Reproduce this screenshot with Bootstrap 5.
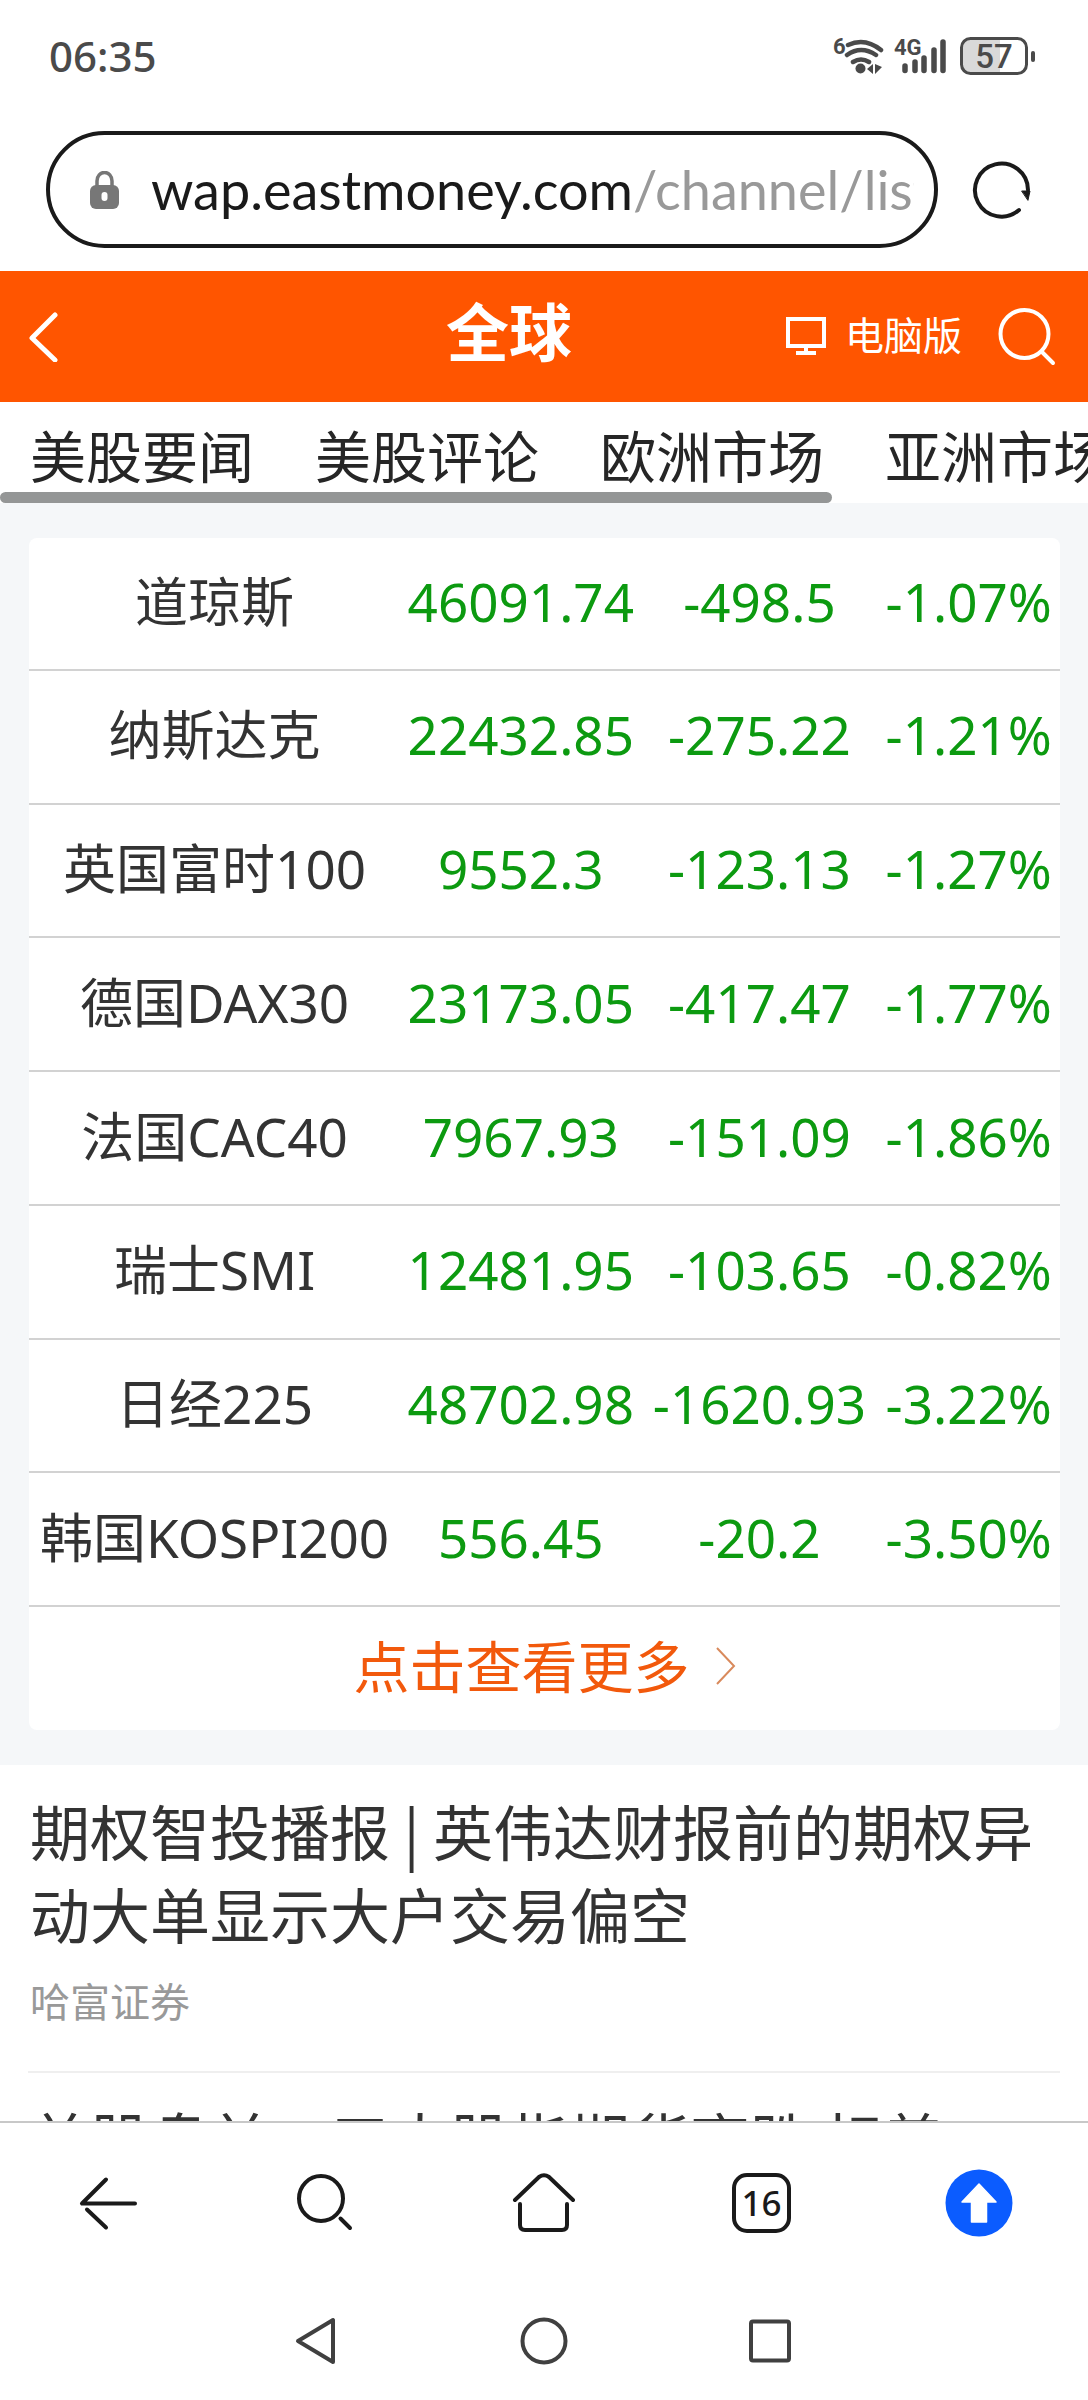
<!DOCTYPE html>
<html lang="zh-CN">
<head>
<meta charset="utf-8">
<meta name="viewport" content="width=device-width, initial-scale=1">
<title>全球</title>
<link href="https://cdn.jsdelivr.net/npm/bootstrap@5.3.0/dist/css/bootstrap.min.css" rel="stylesheet">
<style>
body{font-family:"Noto Sans","Noto Sans CJK SC",sans-serif;color:#333;background:#fff}
svg{display:block;flex:none}
a{color:inherit;text-decoration:none}
.status-bar{height:110px;padding:2px 52px 0 49px;color:#4a4a4a}
.clock{font-size:42px;line-height:50px;font-weight:500}
.address-bar{padding:21px 56px 23px 46px;gap:34px}
.url-pill{height:117px;border:4px solid #1a1a1a;border-radius:60px;background:#fff;padding:0 20px 0 40px;gap:32px;min-width:0}
.url-text{font-family:Lato,"Noto Sans",sans-serif;font-size:54px;line-height:70px;color:#1a1a1a;overflow:hidden;min-width:0}
.url-path{color:#999}
.top-bar{background:#f50;color:#fff;height:131px;padding:0 32px 4px 28px}
.page-title{font-family:"Noto Sans CJK SC",sans-serif;font-size:63px;line-height:72px;font-weight:700;left:0;top:22px;width:1018px}
.desktop-link{font-size:39px;line-height:56px;gap:18px}
.tab-strip{height:90px;padding:0 30px;gap:61px;overflow:hidden;color:#262626}
.tab-strip a{font-size:56px;line-height:80px;padding-top:14px}
.scroll-thumb{height:11px;border-radius:6px;background:#949696}
.market-area{background:#f5f7f9;padding:35px 28px 35px 29px}
.market-card{background:#fff;border-radius:8px}
.quotes{table-layout:fixed;height:1069px;color:#333}
.quotes th,.quotes td{padding:0 0 3px;text-align:center;vertical-align:middle;font-size:53px;line-height:76px;font-weight:400;white-space:nowrap;border-bottom:2px solid #d2d2d2}
.quotes td{color:#0c9a10}
.more-link{height:123px;padding-bottom:5px;font-size:56px;line-height:80px;color:#f2590c;gap:26px}
.news-item{margin:0 28px;padding:23px 2px 0;font-family:"Noto Sans CJK SC",sans-serif;border-bottom:2px solid #efefef;height:308px}
.news-item h2{font-size:60px;line-height:83px;font-weight:400;margin:0}
.news-source{font-size:40px;line-height:56px;color:#999;margin-top:18px}
.bottom-bars{border-top:2px solid #c8c8c8;background:#fff;height:279px}
.tool-row{height:159px}
.tool-row button,.system-row button,.address-bar button,.top-bar button{color:#1a1a1a}
.plain-btn{border:0;background:none;padding:0}
.tab-count{width:59px;height:60px;border:4px solid #1a1a1a;border-radius:15px;font-size:35px;line-height:50px;font-weight:500}
.system-row{gap:178px;height:118px}
</style>
<script src="https://cdn.jsdelivr.net/npm/bootstrap@5.3.0/dist/js/bootstrap.bundle.min.js"></script>
</head>
<body class="vh-100 d-flex flex-column overflow-hidden">
<header class="flex-shrink-0">
  <div class="status-bar d-flex align-items-center justify-content-between">
    <span class="clock">06:35</span>
    <div class="d-flex align-items-center">
      <svg width="204" height="40" viewBox="831 36 204 40" fill="none" stroke="#4a4a4a" stroke-linecap="round" font-family="Roboto, sans-serif">
        <text x="832" y="54" font-size="22" font-weight="700" fill="#4a4a4a" stroke="none">6</text>
        <g stroke-width="4.500"><path d="M847 45Q864 37 880 50M846 55Q860 45 875 55M852 62Q860 57 868 62"/></g>
        <circle cx="859.500" cy="68.500" r="5" fill="#4a4a4a" stroke="none"/>
        <path d="M872 64v10l-6-5zM874 64v10l7-7z" fill="#4a4a4a" stroke="none"/>
        <text x="893" y="55" font-size="22" font-weight="700" fill="#4a4a4a" stroke="none">4G</text>
        <g stroke-width="5.500"><path d="M904 66v4.500M914 62v8.500M923 58v12.500M933 50v20.500M942 42v28.500"/></g>
        <path d="M968 39h31v34h-31q-7 0-7-7v-20q0-7 7-7z" fill="#d9d9d9" stroke="none"/>
        <rect x="960.500" y="38.500" width="65" height="35" rx="9" stroke-width="3"/>
        <path d="M1032 53v7" stroke-width="4"/>
        <text x="993" y="68" text-anchor="middle" font-size="33" font-weight="500" fill="#4a4a4a" stroke="none">57</text>
      </svg>
    </div>
  </div>
  <div class="address-bar d-flex align-items-center">
    <button type="button" class="url-pill d-flex align-items-center flex-grow-1 text-start">
      <svg width="29" height="38" viewBox="0 0 29 38"><path d="M7 15V10a7 8 0 0 1 15 0v5" fill="none" stroke="#777" stroke-width="3.500"/><rect y="14" width="29" height="24" rx="6" fill="#777"/><rect x="11.500" y="21" width="6" height="9" rx="3" fill="#fff"/></svg>
      <span class="url-text text-nowrap flex-grow-1">wap.eastmoney.com<span class="url-path">/channel/list</span></span>
    </button>
    <button type="button" class="plain-btn" aria-label="刷新">
      <svg width="60" height="60" viewBox="971 159 60 60" fill="none" stroke="#1a1a1a" stroke-width="4" stroke-linecap="round"><path d="M1018 209A26.500 26.500 0 1 1 1027 189"/><path d="M1021 190h8l-2 9z" fill="#1a1a1a" stroke-width="1"/></svg>
    </button>
  </div>
  <div class="top-bar d-flex align-items-center justify-content-between position-relative">
    <h1 class="page-title position-absolute text-center m-0">全球</h1>
    <a href="#" aria-label="返回" class="position-relative"><svg width="32" height="54" viewBox="0 0 32 54" fill="none" stroke="#fff" stroke-width="5" stroke-linecap="round" stroke-linejoin="round"><path d="M27 7L4 30L27 52"/></svg></a>
    <div class="d-flex align-items-center gap-4 position-relative">
      <a href="#" class="desktop-link d-flex align-items-center text-white">
        <svg width="42" height="40" viewBox="0 0 42 40" fill="none" stroke="#fff" stroke-width="4"><path d="M3 4h36v27H3zM21 31v6M11 38h20"/></svg>电脑版</a>
      <a href="#" aria-label="搜索"><svg width="70" height="62" viewBox="984 303 70 62" fill="none" stroke="#fff" stroke-width="4" stroke-linecap="round"><ellipse cx="1022.500" cy="333" rx="24" ry="24"/><path d="M1040 351l11 11"/></svg></a>
    </div>
  </div>
</header>
<main class="flex-grow-1 overflow-hidden">
  <nav class="tab-strip d-flex text-nowrap">
    <a href="#">美股要闻</a><a href="#">美股评论</a><a href="#">欧洲市场</a><a href="#">亚洲市场</a>
  </nav>
  <div class="scroll-thumb" style="width:76.5%"></div>
  <section class="market-area">
    <div class="market-card">
      <table class="quotes w-100">
        <colgroup><col style="width:36%"><col style="width:23.4%"><col style="width:22.9%"><col style="width:17.7%"></colgroup>
        <tbody>
          <tr><th scope="row">道琼斯</th><td>46091.74</td><td>-498.5</td><td>-1.07%</td></tr>
          <tr><th scope="row">纳斯达克</th><td>22432.85</td><td>-275.22</td><td>-1.21%</td></tr>
          <tr><th scope="row">英国富时100</th><td>9552.3</td><td>-123.13</td><td>-1.27%</td></tr>
          <tr><th scope="row">德国DAX30</th><td>23173.05</td><td>-417.47</td><td>-1.77%</td></tr>
          <tr><th scope="row">法国CAC40</th><td>7967.93</td><td>-151.09</td><td>-1.86%</td></tr>
          <tr><th scope="row">瑞士SMI</th><td>12481.95</td><td>-103.65</td><td>-0.82%</td></tr>
          <tr><th scope="row">日经225</th><td>48702.98</td><td>-1620.93</td><td>-3.22%</td></tr>
          <tr><th scope="row">韩国KOSPI200</th><td>556.45</td><td>-20.2</td><td>-3.50%</td></tr>
        </tbody>
      </table>
      <a href="#" class="more-link d-flex align-items-center justify-content-center">点击查看更多<svg width="20" height="38" viewBox="0 0 20 38" fill="none" stroke="#d98a5c" stroke-width="2"><path d="M1 1l17 18L1 37"/></svg></a>
    </div>
  </section>
  <article class="news-item">
    <h2><a href="#">期权智投播报 | 英伟达财报前的期权异动大单显示大户交易偏空</a></h2>
    <div class="news-source">哈富证券</div>
  </article>
  <article class="news-item">
    <h2><a href="#">美股盘前：三大股指期货齐跌 标普</a></h2>
  </article>
</main>
<footer class="bottom-bars flex-shrink-0">
  <div class="tool-row row g-0 row-cols-5 align-items-center">
    <div class="col d-flex justify-content-center"><button type="button" class="plain-btn" aria-label="后退"><svg width="60" height="60" viewBox="79 2172 60 60" fill="none" stroke="#1a1a1a" stroke-width="4" stroke-linecap="round" stroke-linejoin="round"><path d="M106 2178.500L82 2202.500H135M87 2208.500L106 2226.500"/></svg></button></div>
    <div class="col d-flex justify-content-center"><button type="button" class="plain-btn" aria-label="搜索"><svg width="60" height="60" viewBox="296 2172 60 60" fill="none" stroke="#1a1a1a" stroke-width="4" stroke-linecap="round"><ellipse cx="321" cy="2197.500" rx="22" ry="22.500"/><path d="M340.500 2217.500l9.500 9.500"/></svg></button></div>
    <div class="col d-flex justify-content-center"><button type="button" class="plain-btn" aria-label="主页"><svg width="64" height="62" viewBox="512 2171 64 62" fill="none" stroke="#1a1a1a" stroke-width="4" stroke-linecap="round" stroke-linejoin="round"><path d="M515 2199L539 2176Q544 2172.500 549 2176L573 2199M520 2203V2224Q520 2229 525 2229H562Q567 2229 567 2224V2203"/></svg></button></div>
    <div class="col d-flex justify-content-center"><button type="button" class="plain-btn tab-count" aria-label="16 个标签页">16</button></div>
    <div class="col d-flex justify-content-center"><button type="button" class="plain-btn" aria-label="回到顶部"><svg width="68" height="68" viewBox="0 0 68 68"><circle cx="34" cy="34" r="33.500" fill="#0b5cff"/><path d="M34 15L51 33H41.500V53H26.500V33H17z" fill="#fff" stroke="#fff" stroke-width="1.500" stroke-linejoin="round"/></svg></button></div>
  </div>
  <div class="system-row d-flex align-items-center justify-content-center">
    <button type="button" class="plain-btn" aria-label="返回键"><svg width="48" height="48" viewBox="0 0 48 48" fill="none" stroke="#404040" stroke-width="4" stroke-linejoin="round"><path d="M39 3V45L4 24z"/></svg></button>
    <button type="button" class="plain-btn" aria-label="主屏幕"><svg width="48" height="48" viewBox="0 0 48 48" fill="none" stroke="#404040" stroke-width="4"><circle cx="24" cy="24" r="21.500"/></svg></button>
    <button type="button" class="plain-btn" aria-label="最近任务"><svg width="48" height="48" viewBox="0 0 48 48" fill="none" stroke="#404040" stroke-width="4"><rect x="5" y="4.500" width="38" height="39" rx="2"/></svg></button>
  </div>
</footer>
</body>
</html>
